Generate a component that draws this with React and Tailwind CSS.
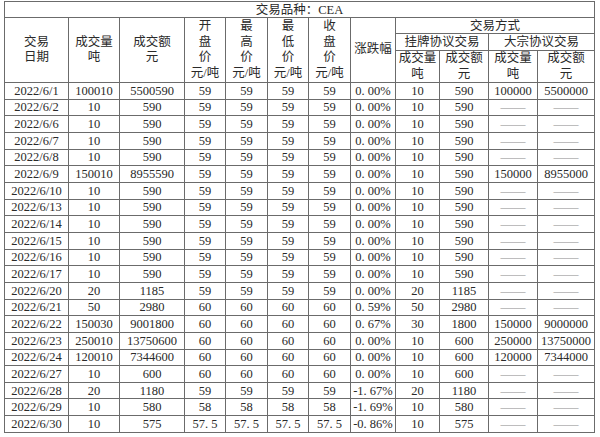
import React from 'react';

const D = '——';

const rows = [
    ['2022/6/1', '100010', '5500590', '59', '59', '59', '59', '0. 00%', '10', '590', '100000', '5500000'],
    ['2022/6/2', '10', '590', '59', '59', '59', '59', '0. 00%', '10', '590', D, D],
    ['2022/6/6', '10', '590', '59', '59', '59', '59', '0. 00%', '10', '590', D, D],
    ['2022/6/7', '10', '590', '59', '59', '59', '59', '0. 00%', '10', '590', D, D],
    ['2022/6/8', '10', '590', '59', '59', '59', '59', '0. 00%', '10', '590', D, D],
    ['2022/6/9', '150010', '8955590', '59', '59', '59', '59', '0. 00%', '10', '590', '150000', '8955000'],
    ['2022/6/10', '10', '590', '59', '59', '59', '59', '0. 00%', '10', '590', D, D],
    ['2022/6/13', '10', '590', '59', '59', '59', '59', '0. 00%', '10', '590', D, D],
    ['2022/6/14', '10', '590', '59', '59', '59', '59', '0. 00%', '10', '590', D, D],
    ['2022/6/15', '10', '590', '59', '59', '59', '59', '0. 00%', '10', '590', D, D],
    ['2022/6/16', '10', '590', '59', '59', '59', '59', '0. 00%', '10', '590', D, D],
    ['2022/6/17', '10', '590', '59', '59', '59', '59', '0. 00%', '10', '590', D, D],
    ['2022/6/20', '20', '1185', '59', '59', '59', '59', '0. 00%', '20', '1185', D, D],
    ['2022/6/21', '50', '2980', '60', '60', '60', '60', '0. 59%', '50', '2980', D, D],
    ['2022/6/22', '150030', '9001800', '60', '60', '60', '60', '0. 67%', '30', '1800', '150000', '9000000'],
    ['2022/6/23', '250010', '13750600', '60', '60', '60', '60', '0. 00%', '10', '600', '250000', '13750000'],
    ['2022/6/24', '120010', '7344600', '60', '60', '60', '60', '0. 00%', '10', '600', '120000', '7344000'],
    ['2022/6/27', '10', '600', '60', '60', '60', '60', '0. 00%', '10', '600', D, D],
    ['2022/6/28', '20', '1180', '59', '59', '59', '59', '-1. 67%', '20', '1180', D, D],
    ['2022/6/29', '10', '580', '58', '58', '58', '58', '-1. 69%', '10', '580', D, D],
    ['2022/6/30', '10', '575', '57. 5', '57. 5', '57. 5', '57. 5', '-0. 86%', '10', '575', D, D],
];

const widths = [64, 51, 65, 41, 42, 41, 42, 45, 44, 49, 49, 57];

const cell = 'border border-[#6b6b6b] p-0 text-center align-middle font-normal';

const App = () => {
    return (
        <div className="w-[600px] h-[437px] bg-white pt-[1px] pl-[4px] text-[#2a2a2a] [font-family:'Liberation_Serif','Noto_Sans_CJK_SC',serif] text-[12.5px] leading-[14px]">
            <table className="border-collapse table-fixed w-[590px]">
                <colgroup>
                    {widths.map((w, i) => (
                        <col key={i} style={{ width: w }} />
                    ))}
                </colgroup>
                <thead className="leading-[15.5px]">
                    <tr className="h-[16px]">
                        <th colSpan={12} className={`${cell} leading-[14px]`}>交易品种：CEA</th>
                    </tr>
                    <tr className="h-[16px]">
                        <th rowSpan={3} className={cell}>交易<br />日期</th>
                        <th rowSpan={3} className={cell}>成交量<br />吨</th>
                        <th rowSpan={3} className={cell}>成交额<br />元</th>
                        <th rowSpan={3} className={cell}>开<br />盘<br />价<br />元/吨</th>
                        <th rowSpan={3} className={cell}>最<br />高<br />价<br />元/吨</th>
                        <th rowSpan={3} className={cell}>最<br />低<br />价<br />元/吨</th>
                        <th rowSpan={3} className={cell}>收<br />盘<br />价<br />元/吨</th>
                        <th rowSpan={3} className={cell}>涨跌幅</th>
                        <th colSpan={4} className={`${cell} leading-[14px]`}>交易方式</th>
                    </tr>
                    <tr className="h-[17px]">
                        <th colSpan={2} className={`${cell} leading-[14px]`}>挂牌协议交易</th>
                        <th colSpan={2} className={`${cell} leading-[14px]`}>大宗协议交易</th>
                    </tr>
                    <tr className="h-[32px]">
                        <th className={cell}>成交量<br />吨</th>
                        <th className={cell}>成交额<br />元</th>
                        <th className={cell}>成交量<br />吨</th>
                        <th className={cell}>成交额<br />元</th>
                    </tr>
                </thead>
                <tbody>
                    {rows.map((r, i) => (
                        <tr key={i} className="h-[16.67px]">
                            {r.map((v, j) => (
                                <td key={j} className={`${cell} whitespace-nowrap ${v === D ? 'text-[#8a8a8a]' : ''}`}>
                                    {v}
                                </td>
                            ))}
                        </tr>
                    ))}
                </tbody>
            </table>
        </div>
    );
};

export default App;
